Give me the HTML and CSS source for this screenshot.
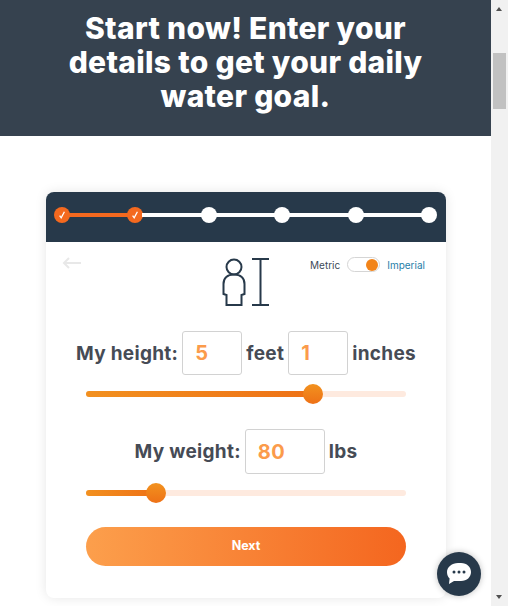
FILE: index.html
```html
<!DOCTYPE html>
<html>
<head>
    <title>Daily Water Goal</title>
    <link rel="stylesheet" href="styles.css">
</head>
<body>
    <div class="page">
        <div class="hero">
            <h1>Start now! Enter your<br>details to get your daily<br>water goal.</h1>
        </div>

        <div class="card">
            <!-- Progress steps -->
            <div class="stepper">
                <span class="dot done"><svg width="10" height="10" viewBox="0 0 10 10"><path d="M2.6 5.6 L4.2 7.8 L7.4 1.8" fill="none" stroke="#fff" stroke-width="1.3"/></svg></span>
                <span class="line done"></span>
                <span class="dot done"><svg width="10" height="10" viewBox="0 0 10 10"><path d="M2.6 5.6 L4.2 7.8 L7.4 1.8" fill="none" stroke="#fff" stroke-width="1.3"/></svg></span>
                <span class="line"></span>
                <span class="dot"></span>
                <span class="line"></span>
                <span class="dot"></span>
                <span class="line"></span>
                <span class="dot"></span>
                <span class="line"></span>
                <span class="dot"></span>
            </div>

            <div class="card-body">
                <div class="top-row">
                    <svg class="back" width="20" height="12" viewBox="0 0 20 12"><path d="M19 6 H2 M7 1 L2 6 L7 11" fill="none" stroke="#e8e8e8" stroke-width="2"/></svg>
                    <svg class="person" width="48" height="48" viewBox="0 0 48 48">
                        <g fill="none" stroke="#27394a" stroke-width="2">
                            <circle cx="12" cy="9" r="7.5"/>
                            <path d="M12 16.5 C5.5 16.5 1.5 20 1.5 26 V36 L4.5 37 V47 H19.5 V37 L22.5 36 V26 C22.5 20 18.5 16.5 12 16.5 Z"/>
                            <path d="M30 1 H47 M38.5 1 V47 M30 47 H47"/>
                        </g>
                    </svg>
                    <div class="units">
                        <span class="unit">Metric</span>
                        <span class="toggle"><span class="knob"></span></span>
                        <span class="unit active">Imperial</span>
                    </div>
                </div>

                <div class="field-row height-row">
                    <label>My height:</label>
                    <span class="value-box">5</span>
                    <label>feet</label>
                    <span class="value-box">1</span>
                    <label>inches</label>
                </div>
                <div class="slider first"><div class="slider-fill" style="width: 227px"><span class="thumb"></span></div></div>

                <div class="field-row weight-row">
                    <label>My weight:</label>
                    <span class="value-box wide">80</span>
                    <label>lbs</label>
                </div>
                <div class="slider"><div class="slider-fill" style="width: 70px"><span class="thumb"></span></div></div>

                <button type="button" class="next-btn">Next</button>
            </div>
        </div>
    </div>

    <!-- Fake browser scrollbar -->
    <div class="scrollbar">
        <span class="arrow-up"></span>
        <span class="scroll-thumb"></span>
        <span class="arrow-down"></span>
    </div>

    <div class="chat">
        <svg width="26" height="24" viewBox="0 0 26 24">
            <path d="M12 1 H15 C21 1 25 5 25 10 C25 15 21 19 15 19 H8 L3 22 L3.6 16.4 C2 15 1 12.6 1 10 C1 5 6 1 12 1 Z" fill="#fff"/>
            <circle cx="8" cy="10" r="1.5" fill="#27394a"/>
            <circle cx="13" cy="10" r="1.5" fill="#27394a"/>
            <circle cx="18" cy="10" r="1.5" fill="#27394a"/>
        </svg>
    </div>
</body>
</html>
```

FILE: styles.css
```css
html, body {
    height: 100%;
}
body {
    margin: 0;
    display: flex;
    height: 606px;
    overflow: hidden;
    background-color: #fff;
    font-family: Inter, "Open Sans", sans-serif;
}
.page {
    width: 491px;
    flex: none;
}
.hero {
    height: 136px;
    box-sizing: border-box;
    padding-top: 11px;
    background-color: #36424f;
}
.hero h1 {
    margin: 0;
    color: #fff;
    font-size: 30px;
    font-weight: 800;
    line-height: 34px;
    letter-spacing: 0.3px;
    text-align: center;
}
.card {
    width: 400px;
    height: 406px;
    margin: 56px 0 0 46px;
    border-radius: 8px;
    background-color: #fff;
    box-shadow: 0 0 12px rgba(0, 0, 0, 0.1);
    overflow: hidden;
}
.stepper {
    height: 50px;
    box-sizing: border-box;
    padding: 15px 9px 0 8px;
    display: flex;
    align-items: flex-start;
    background-color: #27394a;
}
.dot {
    flex: none;
    width: 16px;
    height: 16px;
    border-radius: 50%;
    background-color: #fff;
    display: flex;
    align-items: center;
    justify-content: center;
}
.dot.done {
    background-color: #f4691f;
}
.line {
    flex: 1;
    height: 4px;
    margin: 6px -1px 0;
    background-color: #fff;
}
.line.done {
    background-color: #f4691f;
}
.card-body {
    padding: 0 40px;
}
.top-row {
    position: relative;
    height: 89px;
    display: flex;
    justify-content: center;
    padding-top: 16px;
    box-sizing: border-box;
}
.back {
    position: absolute;
    left: -24px;
    top: 15px;
}
.units {
    position: absolute;
    right: -19px;
    top: 15px;
    display: flex;
    align-items: center;
    gap: 7px;
}
.unit {
    font-size: 10px;
    color: #3d4a58;
}
.unit.active {
    color: #1f7ea8;
}
.toggle {
    width: 33px;
    height: 15px;
    box-sizing: border-box;
    border: 1px solid #d5d5d5;
    border-radius: 8px;
    display: flex;
    justify-content: flex-end;
    align-items: center;
    padding-right: 1px;
}
.knob {
    width: 12px;
    height: 12px;
    border-radius: 50%;
    background-color: #f28419;
}
.field-row {
    display: flex;
    justify-content: center;
    align-items: center;
    gap: 4px;
    margin: 0 -20px;
    color: #464b55;
    font-size: 19px;
    font-weight: 700;
    letter-spacing: 0.3px;
}
.value-box {
    width: 60px;
    height: 44px;
    box-sizing: border-box;
    border: 1px solid #d2d2d2;
    border-radius: 3px;
    padding-left: 12px;
    display: flex;
    align-items: center;
    color: #fb9b4b;
    font-size: 20px;
    font-weight: 700;
}
.value-box.wide {
    width: 80px;
    height: 45px;
}
.slider {
    height: 6px;
    margin-top: 16px;
    border-radius: 3px;
    background-color: #feeadf;
}
.slider-fill {
    position: relative;
    height: 100%;
    border-radius: 3px 0 0 3px;
    background: linear-gradient(to right, #f2901f, #ee7116);
}
.thumb {
    position: absolute;
    right: -10px;
    top: -7px;
    width: 20px;
    height: 20px;
    border-radius: 50%;
    background: linear-gradient(#f2921f, #ee7116);
}
.weight-row {
    margin-top: 32px;
}
.next-btn {
    display: block;
    width: 100%;
    height: 39px;
    margin-top: 31px;
    padding-bottom: 3px;
    border: none;
    border-radius: 20px;
    background: linear-gradient(to right, #fc9f4c, #f4661f);
    color: #fff;
    font-family: inherit;
    font-size: 12.5px;
    font-weight: 700;
    cursor: pointer;
}
.scrollbar {
    width: 17px;
    flex: none;
    position: relative;
    background-color: #f1f1f1;
}
.scroll-thumb {
    position: absolute;
    left: 2px;
    top: 53px;
    width: 13px;
    height: 56px;
    background-color: #c1c1c1;
}
.arrow-up, .arrow-down {
    position: absolute;
    left: 5px;
    width: 0;
    height: 0;
    border-left: 3.5px solid transparent;
    border-right: 3.5px solid transparent;
}
.arrow-up {
    top: 7px;
    border-bottom: 4px solid #505050;
}
.arrow-down {
    bottom: 7px;
    border-top: 4px solid #505050;
}
.chat {
    position: absolute;
    left: 437px;
    top: 552px;
    width: 44px;
    height: 44px;
    border-radius: 50%;
    background-color: #27394a;
    box-shadow: 0 0 6px rgba(0, 0, 0, 0.25);
    display: flex;
    align-items: center;
    justify-content: center;
}
```
